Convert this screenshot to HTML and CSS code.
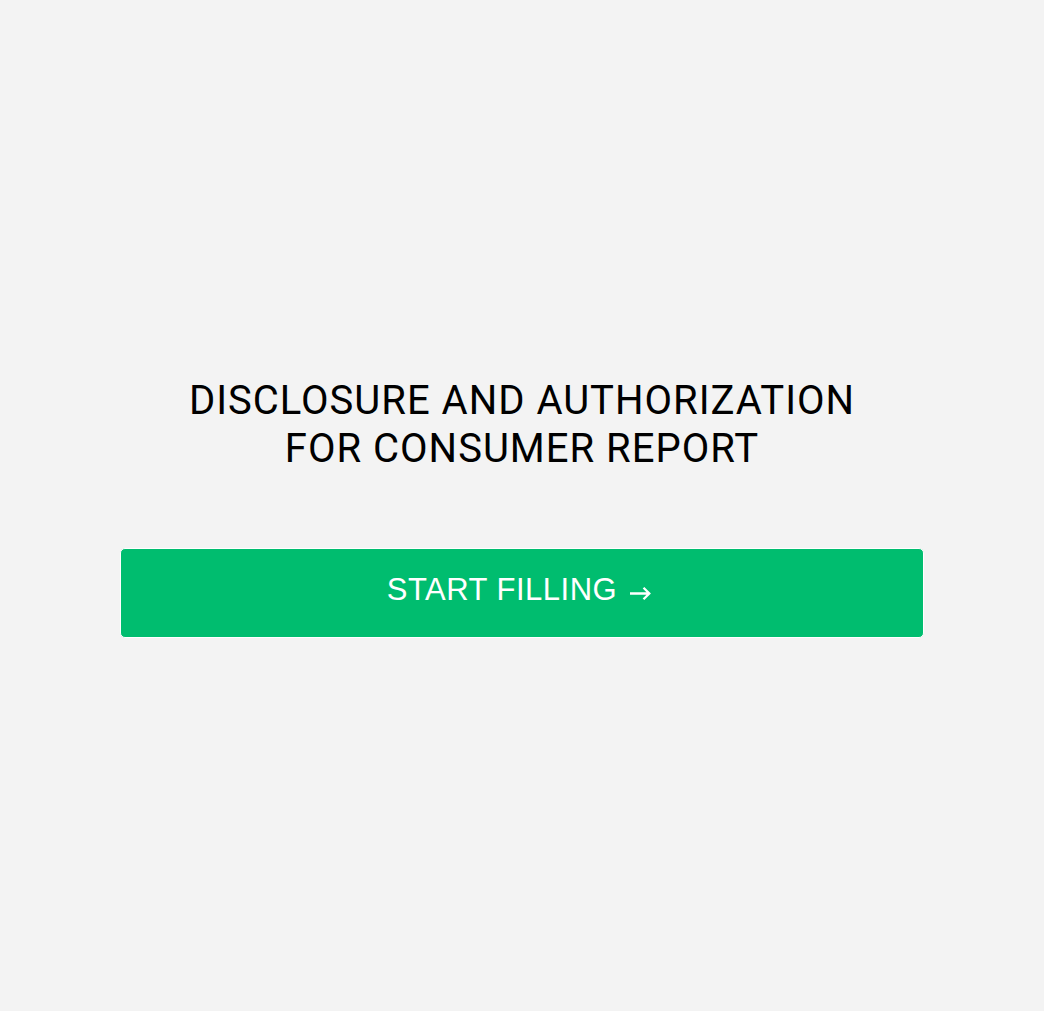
FILE: index.html
```html
<!DOCTYPE html>
<html lang="en">
<head>
<meta charset="utf-8">
<title>Disclosure and Authorization</title>
<link rel="stylesheet" href="styles.css">
</head>
<body>
<main class="page">
  <h1 class="title">DISCLOSURE AND AUTHORIZATION<br>FOR CONSUMER REPORT</h1>
  <button class="start" type="button">START FILLING<svg class="arrow" width="22" height="13" viewBox="0 0 22 13" aria-hidden="true"><path d="M1 6.5H20.5M14.5 0.8L20.3 6.5L14.5 12.2" fill="none" stroke="#ffffff" stroke-width="2.3"/></svg></button>
</main>
</body>
</html>
```
FILE: styles.css
```css
html, body {
  margin: 0;
  padding: 0;
  background: #f3f3f3;
}
.page {
  box-sizing: border-box;
  min-height: 1011px;
  padding: 377px 120px 0;
  display: flex;
  flex-direction: column;
  align-items: stretch;
}
.title {
  margin: 0;
  font-family: Roboto, "Liberation Sans", sans-serif;
  font-weight: 400;
  font-size: 40px;
  line-height: 48px;
  letter-spacing: 1px;
  color: #000;
  text-align: center;
}
.start {
  margin-top: 75px;
  height: 90px;
  box-sizing: border-box;
  border: 1px solid #ffffff;
  border-radius: 5px;
  background: #00bd6f;
  color: #ffffff;
  font-family: "Liberation Sans", Arial, sans-serif;
  font-size: 31px;
  letter-spacing: 0.5px;
  cursor: pointer;
  padding: 0 6px 7px 0;
}
.arrow {
  margin-left: 12px;
  vertical-align: baseline;
}
```
